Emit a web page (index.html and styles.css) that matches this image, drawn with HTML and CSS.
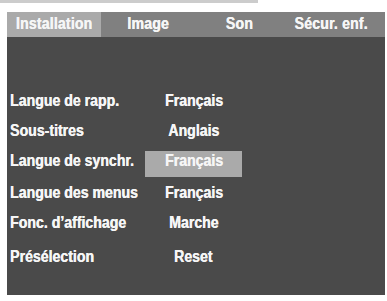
FILE: index.html
```html
<!DOCTYPE html>
<html lang="fr">
<head>
<meta charset="utf-8">
<link rel="stylesheet" href="styles.css">
</head>
<body>
<div class="topbar"></div>
<div class="screen">
  <div class="tabs">
    <div class="tab active"><span class="txt">Installation</span></div>
    <div class="tab"><span class="txt">Image</span></div>
    <div class="tab"><span class="txt">Son</span></div>
    <div class="tab last"><span class="txt">Sécur. enf.</span></div>
  </div>
  <div class="panel">
    <div class="row"><div class="label"><span class="txt">Langue de rapp.</span></div><div class="value"><span class="txt">Français</span></div></div>
    <div class="row"><div class="label"><span class="txt">Sous-titres</span></div><div class="value"><span class="txt">Anglais</span></div></div>
    <div class="row"><div class="label"><span class="txt">Langue de synchr.</span></div><div class="value selected"><span class="txt">Français</span></div></div>
    <div class="row row-wide"><div class="label"><span class="txt">Langue des menus</span></div><div class="value"><span class="txt">Français</span></div></div>
    <div class="row"><div class="label"><span class="txt">Fonc. d’affichage</span></div><div class="value"><span class="txt">Marche</span></div></div>
    <div class="row row-wider"><div class="label"><span class="txt">Présélection</span></div><div class="value"><span class="txt">Reset</span></div></div>
  </div>
</div>
</body>
</html>
```
FILE: styles.css
```css
html, body {
  margin: 0;
  padding: 0;
  background: #ffffff;
}
body {
  width: 387px;
  height: 301px;
  overflow: hidden;
  font-family: "Liberation Sans", Arial, sans-serif;
  font-weight: bold;
  font-size: 17px;
  color: #f6f6f6;
}
.txt {
  display: inline-block;
  white-space: nowrap;
  transform: scaleX(0.83);
  text-shadow: 0.4px 0 0 currentColor;
}
.topbar {
  width: 258px;
  height: 3px;
  background: #cccccc;
}
.screen {
  margin: 9px 2px 0 7px;
  width: 378px;
}
.tabs {
  display: grid;
  grid-template-columns: 94px 94px 89px 1fr;
  height: 25px;
  background: #808080;
}
.tab {
  display: flex;
  justify-content: center;
  line-height: 23px;
  padding-bottom: 2px;
  white-space: nowrap;
}
.tab .txt {
  letter-spacing: 0.2px;
}
.tab.active {
  background: #aaaaaa;
}
.tab.last {
  padding-right: 7px;
}
.panel {
  height: 258px;
  box-sizing: border-box;
  background: #4a4a4a;
  padding: 54px 0 0 3px;
  display: flex;
  flex-direction: column;
  gap: 4px;
}
.row {
  display: flex;
  height: 26px;
}
.row-wide {
  margin-top: 2px;
}
.row-wider {
  margin-top: 4px;
}
.label {
  width: 135px;
  line-height: 20px;
  padding-bottom: 6px;
}
.label .txt {
  transform-origin: left center;
}
.value {
  width: 97px;
  display: flex;
  justify-content: center;
  line-height: 20px;
  padding-bottom: 6px;
  box-sizing: border-box;
  height: 26px;
}
.value.selected {
  background: #aaaaaa;
}
```
